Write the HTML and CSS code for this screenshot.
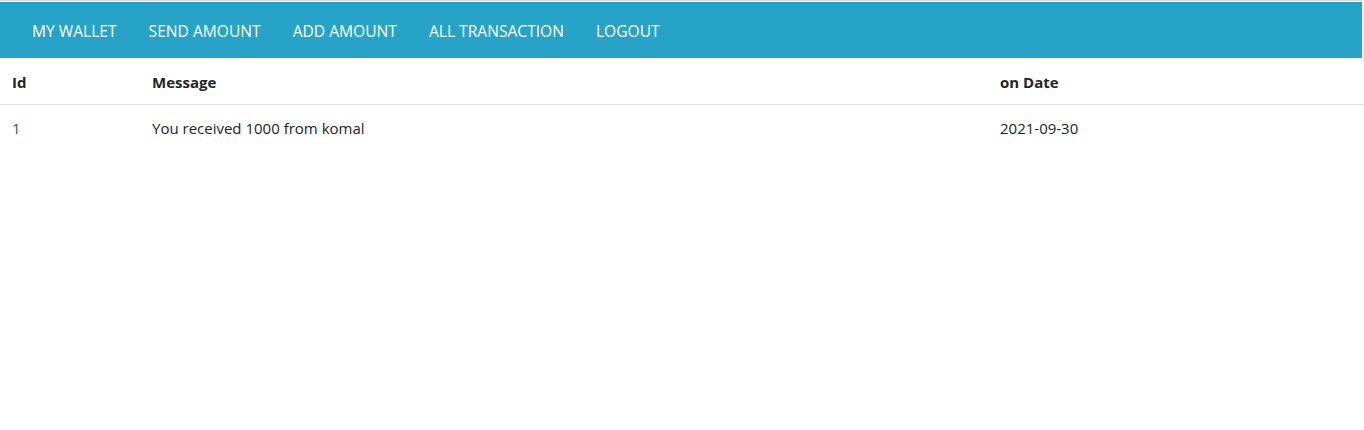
FILE: index.html
```html
<!DOCTYPE html>
<html lang="en">
<head>
<meta charset="utf-8">
<title>All Transaction</title>
<link rel="stylesheet" href="styles.css">
</head>
<body>
<div class="topline"></div>
<nav class="navbar">
  <a class="nav-link" href="#">MY WALLET</a>
  <a class="nav-link" href="#">SEND AMOUNT</a>
  <a class="nav-link" href="#">ADD AMOUNT</a>
  <a class="nav-link" href="#">ALL TRANSACTION</a>
  <a class="nav-link" href="#">LOGOUT</a>
</nav>
<table class="table">
  <thead>
    <tr>
      <th class="col-id">Id</th>
      <th class="col-msg">Message</th>
      <th class="col-date">on Date</th>
    </tr>
  </thead>
  <tbody>
    <tr>
      <td class="id-cell">1</td>
      <td>You received 1000 from komal</td>
      <td>2021-09-30</td>
    </tr>
  </tbody>
</table>
</body>
</html>
```
FILE: styles.css
```css
html, body {
  margin: 0;
  padding: 0;
  background: #fff;
  font-family: "Open Sans", "Noto Sans", sans-serif;
  color: #212529;
}
.topline {
  height: 1px;
  background: #dcdcdc;
  width: 1362px;
  margin-bottom: 1px;
}
.navbar {
  display: flex;
  align-items: center;
  width: 1362px;
  height: 56px;
  padding-left: 16px;
  padding-top: 2px;
  box-sizing: border-box;
  background: #27a3c8;
}
.nav-link {
  color: #fff;
  text-decoration: none;
  font-size: 15.6px;
  padding: 0 16px;
  line-height: 22px;
}
.table {
  width: 100%;
  border-collapse: collapse;
  font-size: 15px;
}
.table th, .table td {
  text-align: left;
  padding: 12px 12px;
  line-height: 22px;
  vertical-align: top;
}
.table thead th {
  font-weight: 700;
  padding-top: 13px;
  padding-bottom: 11px;
  border-bottom: 1px solid #dee2e6;
}
.col-id { width: 116px; }
.col-msg { width: 824px; }
.id-cell { color: #7a4a10; }
```
